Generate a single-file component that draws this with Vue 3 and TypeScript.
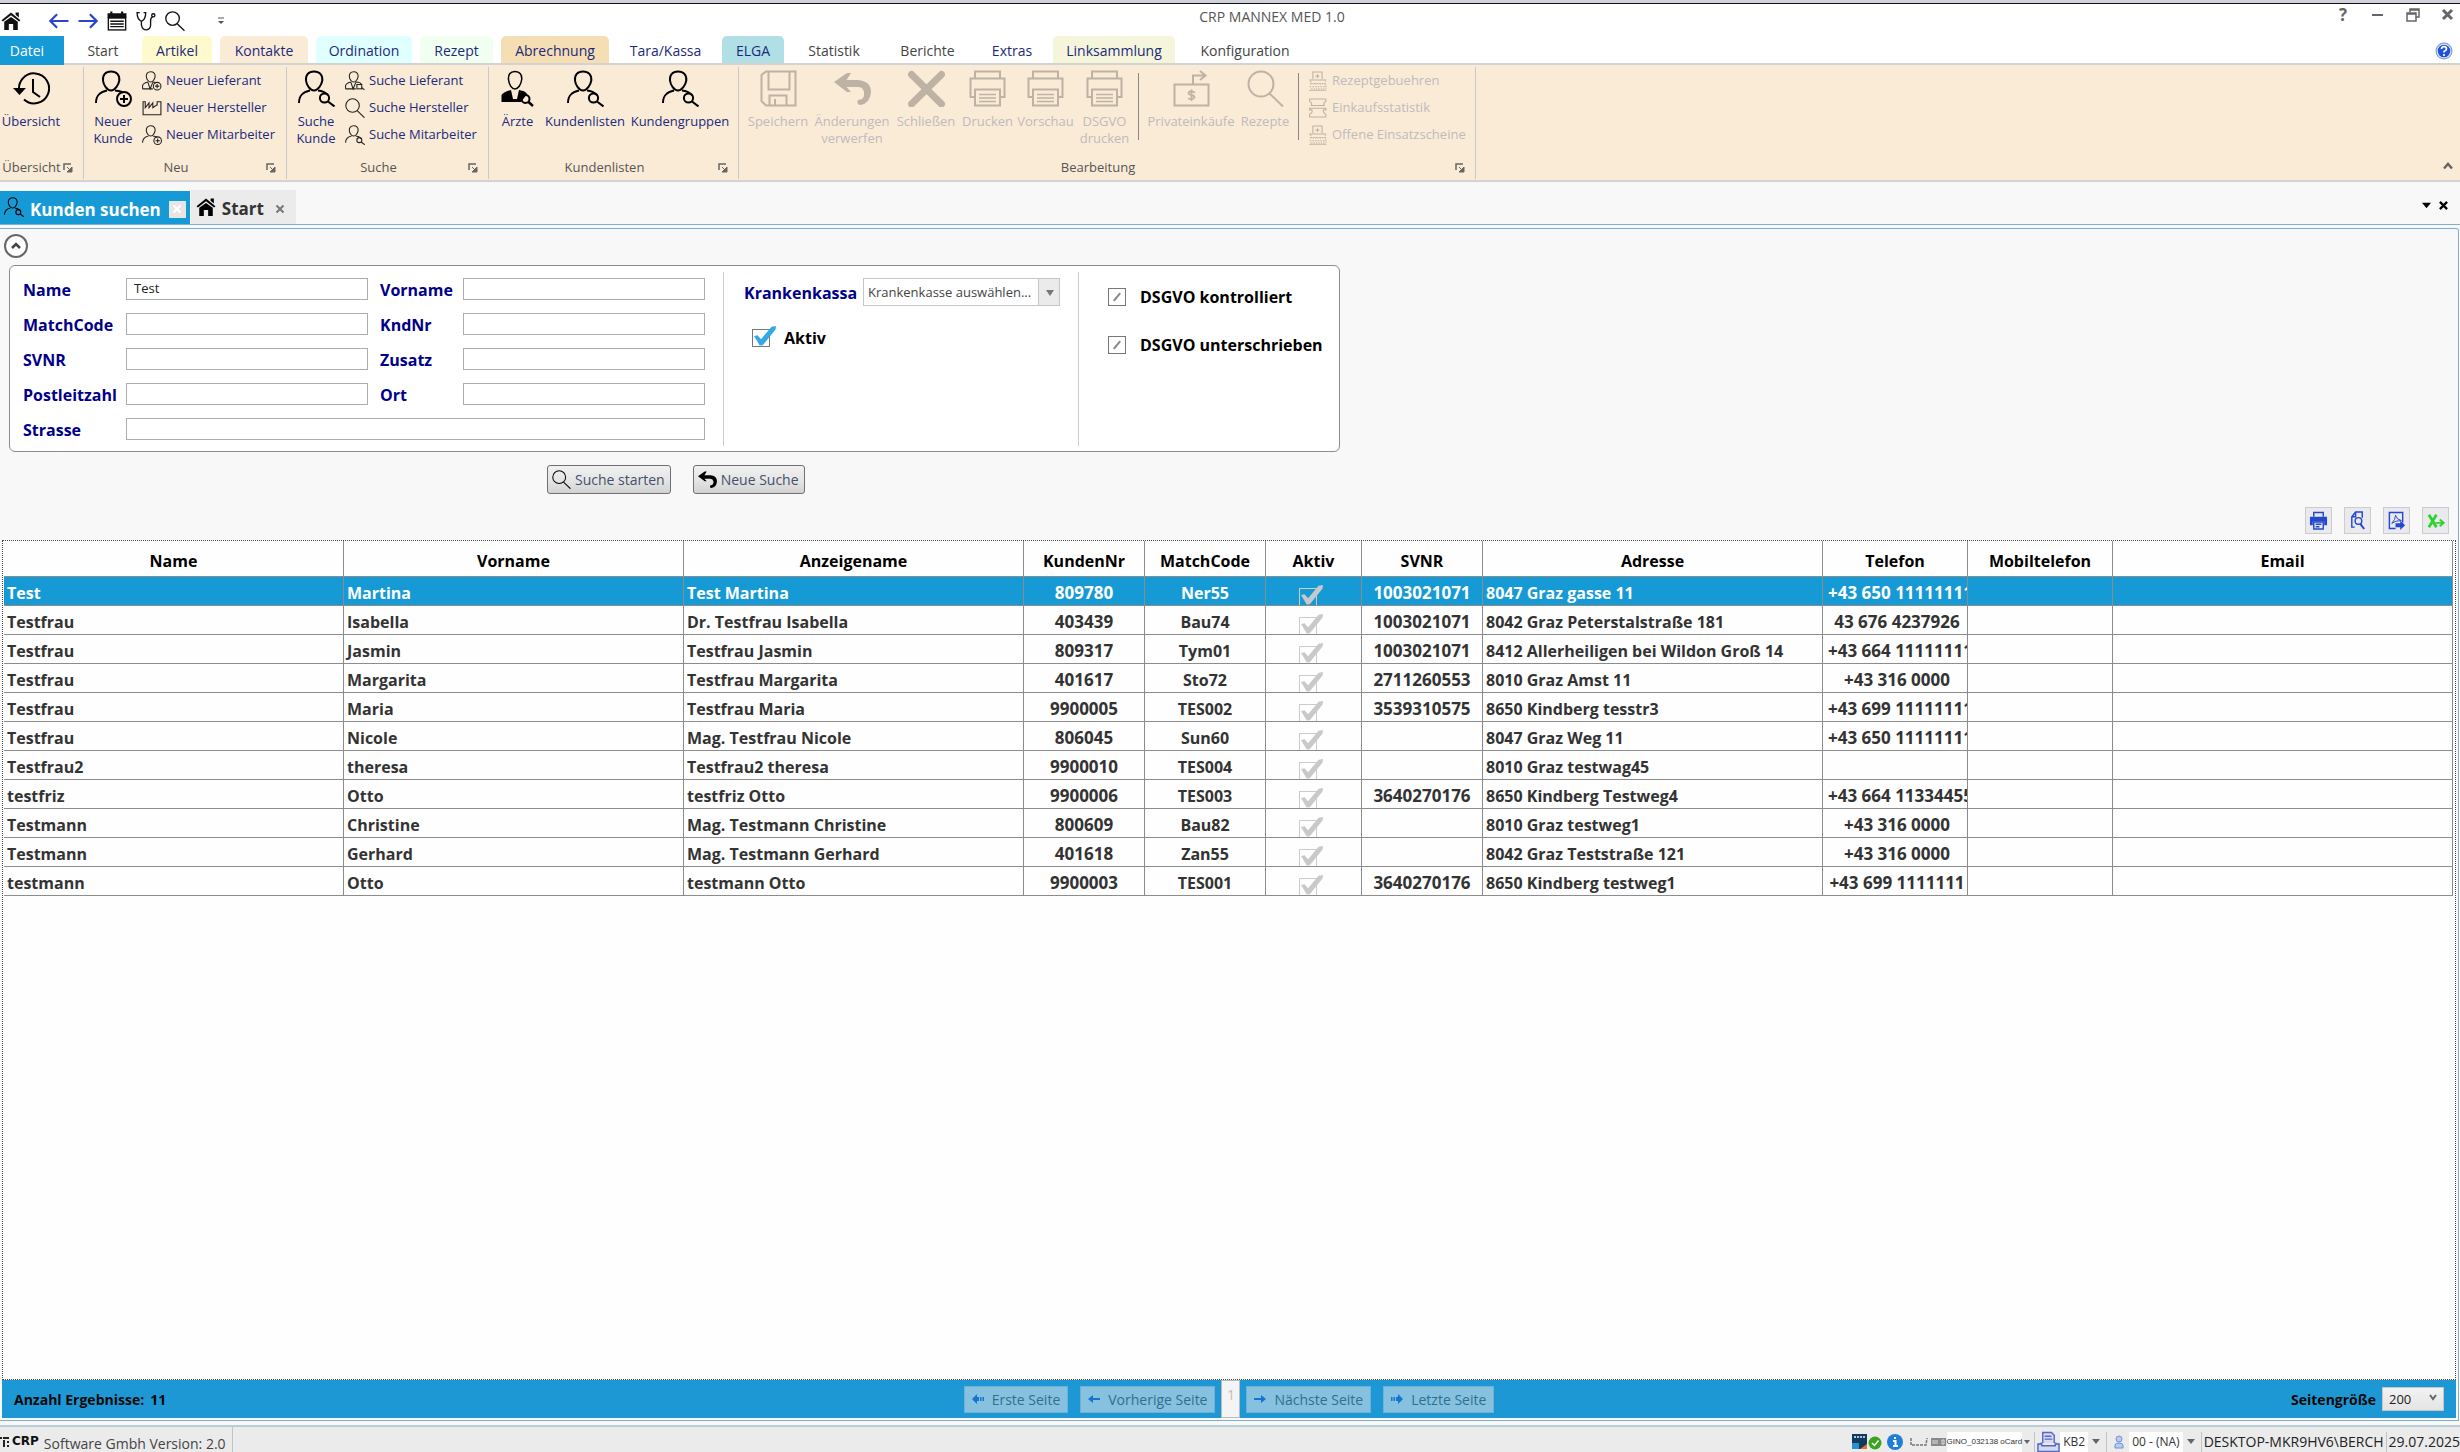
<script setup lang="ts">
import { ref } from 'vue'

interface Customer {
  name: string
  vorname: string
  anzeige: string
  nr: string
  code: string
  svnr: string
  adresse: string
  telefon: string
}

const person =
  '<path d="M16 1.500C10.500 1.500 7.500 5 8 10.500C8.500 15 12 20.500 16 20.500S23.500 15 24.300 10.500C24.800 5 21.500 1.500 16 1.500Z"/>'
const lensSmall = '<circle cx="26.500" cy="28" r="4.600"/><path d="M30 31.500L36.500 36.500"/>'

const icons: Record<string, string> = {
  history:
    '<path d="M6.500 20A15 15 0 1 1 11 27.500" transform="translate(0 2)"/><path d="M20 9v13l7 5"/><path d="M0 18h13l-6.500 7z" fill="currentColor" stroke="none"/>',
  personAdd: `${person}<path d="M1 33C1 25 5 22 12 20.500M20 20.500C24 21 26 21.500 28 22.500"/><circle cx="29" cy="29" r="7"/><path d="M29 25v8M25 29h8"/>`,
  personSearch: `${person}<path d="M1 33C1 25 5 22 12 20.500M20 20.500C25 21 28 23 30 25"/>${lensSmall}`,
  supplierAdd: `${person}<path d="M1 33V27Q3 22 11 20.500M1 33H20M11 21l4 12 5-12M20 20.500Q24 21 26 22"/><circle cx="28" cy="28" r="7"/><path d="M28 24v8M24 28h8"/>`,
  supplierSearch: `${person}<path d="M1 33V27Q3 22 11 20.500M1 33H20M11 21l4 12 5-12M20 20.500Q30 21 30 25"/><rect x="22" y="25" width="9" height="8"/><path d="M31 31l5 4"/>`,
  factory: '<path d="M2 31V7h4v11l7-9v9l7-9v9l7-5h1V7h7v24z"/>',
  lens: '<circle cx="14" cy="14" r="12.500"/><path d="M22.500 23.500L36 36.500"/>',
  doctor:
    '<path d="M16 1.500C11 1.500 9 5 9.500 9.500C10 15 13 19 16 19S22 15 22.700 9.500C23 5 21 1.500 16 1.500Z" stroke-width="1.500"/><path d="M2.500 32V25Q4 22 12 20l2 9h4l2-9Q27 21 28 24L22 32z" fill="currentColor" stroke="none"/><circle cx="26.500" cy="29" r="4" stroke-width="2"/><path d="M29.500 32L34 36" stroke-width="2.500"/>',
  save: '<path d="M6 1.500H35.500V35.500H6L1.500 31V5Z"/><path d="M8.500 2V19.500H29.500V2M9.500 35V25.500H26.500V35M15 29v6"/>',
  undo: '<path d="M0 12L13 3H17L12.500 10H24Q37 11 37 22Q36 34 26 35Q22 34 24 30Q31 30 30 22Q29 17 24 17H12.500L17 22H13Z" fill="currentColor" stroke="none"/>',
  cross: '<path d="M3.500 4.500L33.500 34M33.500 4.500L3.500 34" stroke-width="7" stroke-linecap="round"/>',
  printer:
    '<path d="M6 8.500V1.500H31V8.500M6 27H1.500V8.500H35.500V27H31"/><rect x="6" y="19.500" width="25" height="16"/><path d="M10 24.500h17M10 28h17M10 31.500h17" stroke-width="1.300"/>',
  money:
    '<rect x="1.500" y="14.500" width="34" height="21"/><path d="M20 14V5.500H32M27 1l5.500 4.500L27 10"/><path d="M22 22.500Q15.500 20 15.500 23.500Q16 25 18.500 25.200Q21.500 25.500 21.500 27.500Q20.500 30 15 28.500M18.500 19.500V31" stroke-width="1.800"/>',
  register:
    '<path d="M9 15V2h17v13M2 16.500h32M2 35.500h32M17.500 6v7M14 9.500h7"/><path d="M5 18v5h27v-5M3 29h31" stroke-dasharray="3 2"/><path d="M4 24h29v9H4" stroke-dasharray="2 2.500"/>',
  stack:
    '<path d="M3 2h30v4q-6 4-3 8H6q3-4-3-8zM3 19h30v3h-4q-3 4 4 8v5H3v-5q7-4 4-8H3z"/>',
  home: '<path d="M1 17L18.500 3L36 17L33.500 19.500L18.500 8L3.500 19.500ZM27 3h6v9l-6-5zM6 20L18.500 11L31 20V35H22.500V24h-8V35H6Z" fill="currentColor" stroke="none"/>',
  arrowLeft: '<path d="M36 18.500H3M15 6L2.500 18.500L15 31"/>',
  arrowRight: '<path d="M1 18.500H34M22 6L34.500 18.500L22 31"/>',
  calendar:
    '<path d="M1 4h5v-3h4v3h16v-3h4v3h6v9H1z" fill="currentColor" stroke="none"/><rect x="2.500" y="13" width="32" height="22"/><path d="M6 19h25M6 24h25M6 29h25" stroke-width="2.500"/>',
  stetho:
    '<path d="M7 3H2Q2 16 10 19Q18 16 18 3H14M10 19V26Q12 35 19 35Q27 34 27 26V18Q27 12 31 11"/><circle cx="32" cy="8" r="3"/>',
  launcher: '<path d="M1 7V1H8" stroke-width="1.500"/><path d="M4 4l3 3M9 4v5H4z" fill="currentColor" stroke-width="1"/>',
}

const tabs = [
  { label: 'Datei', cls: 'file' },
  { label: 'Start', cls: 'plain' },
  { label: 'Artikel', cls: 'yellow' },
  { label: 'Kontakte', cls: 'peach' },
  { label: 'Ordination', cls: 'cyan' },
  { label: 'Rezept', cls: 'mint' },
  { label: 'Abrechnung', cls: 'wheat' },
  { label: 'Tara/Kassa', cls: '' },
  { label: 'ELGA', cls: 'teal' },
  { label: 'Statistik', cls: 'plain' },
  { label: 'Berichte', cls: 'plain' },
  { label: 'Extras', cls: '' },
  { label: 'Linksammlung', cls: 'beige' },
  { label: 'Konfiguration', cls: 'plain' },
]

const groups = [
  { id: 'overview', title: 'Übersicht', big: [{ icon: 'history', label: ['Übersicht'] }], small: [] },
  {
    id: 'new',
    title: 'Neu',
    big: [{ icon: 'personAdd', label: ['Neuer', 'Kunde'] }],
    small: [
      { icon: 'supplierAdd', label: 'Neuer Lieferant' },
      { icon: 'factory', label: 'Neuer Hersteller' },
      { icon: 'personAdd', label: 'Neuer Mitarbeiter' },
    ],
  },
  {
    id: 'search',
    title: 'Suche',
    big: [{ icon: 'personSearch', label: ['Suche', 'Kunde'] }],
    small: [
      { icon: 'supplierSearch', label: 'Suche Lieferant' },
      { icon: 'lens', label: 'Suche Hersteller' },
      { icon: 'personSearch', label: 'Suche Mitarbeiter' },
    ],
  },
  {
    id: 'lists',
    title: 'Kundenlisten',
    big: [
      { icon: 'doctor', label: ['Ärzte'] },
      { icon: 'personSearch', label: ['Kundenlisten'] },
      { icon: 'personSearch', label: ['Kundengruppen'] },
    ],
    small: [],
  },
  {
    id: 'edit',
    title: 'Bearbeitung',
    disabled: true,
    big: [
      { icon: 'save', label: ['Speichern'] },
      { icon: 'undo', label: ['Änderungen', 'verwerfen'] },
      { icon: 'cross', label: ['Schließen'] },
      { icon: 'printer', label: ['Drucken'] },
      { icon: 'printer', label: ['Vorschau'] },
      { icon: 'printer', label: ['DSGVO', 'drucken'] },
      { icon: '', label: [] },
      { icon: 'money', label: ['Privateinkäufe'] },
      { icon: 'lens', label: ['Rezepte'] },
      { icon: '', label: [] },
    ],
    small: [
      { icon: 'register', label: 'Rezeptgebuehren' },
      { icon: 'stack', label: 'Einkaufsstatistik' },
      { icon: 'register', label: 'Offene Einsatzscheine' },
    ],
  },
]

const fields = [
  { id: 'name', label: 'Name' },
  { id: 'vorname', label: 'Vorname' },
  { id: 'matchcode', label: 'MatchCode' },
  { id: 'kndnr', label: 'KndNr' },
  { id: 'svnr', label: 'SVNR' },
  { id: 'zusatz', label: 'Zusatz' },
  { id: 'plz', label: 'Postleitzahl' },
  { id: 'ort', label: 'Ort' },
  { id: 'strasse', label: 'Strasse' },
]
const query = ref<Record<string, string>>({ name: 'Test' })
const aktiv = ref(true)

const columns = ['Name', 'Vorname', 'Anzeigename', 'KundenNr', 'MatchCode', 'Aktiv', 'SVNR', 'Adresse', 'Telefon', 'Mobiltelefon', 'Email']

const rows: Customer[] = [
  { name: 'Test', vorname: 'Martina', anzeige: 'Test Martina', nr: '809780', code: 'Ner55', svnr: '1003021071', adresse: '8047 Graz gasse 11', telefon: '+43 650 11111111' },
  { name: 'Testfrau', vorname: 'Isabella', anzeige: 'Dr. Testfrau Isabella', nr: '403439', code: 'Bau74', svnr: '1003021071', adresse: '8042 Graz Peterstalstraße 181', telefon: '43 676 4237926' },
  { name: 'Testfrau', vorname: 'Jasmin', anzeige: 'Testfrau Jasmin', nr: '809317', code: 'Tym01', svnr: '1003021071', adresse: '8412 Allerheiligen bei Wildon Groß 14', telefon: '+43 664 11111111' },
  { name: 'Testfrau', vorname: 'Margarita', anzeige: 'Testfrau Margarita', nr: '401617', code: 'Sto72', svnr: '2711260553', adresse: '8010 Graz Amst 11', telefon: '+43 316 0000' },
  { name: 'Testfrau', vorname: 'Maria', anzeige: 'Testfrau Maria', nr: '9900005', code: 'TES002', svnr: '3539310575', adresse: '8650 Kindberg tesstr3', telefon: '+43 699 11111111' },
  { name: 'Testfrau', vorname: 'Nicole', anzeige: 'Mag. Testfrau Nicole', nr: '806045', code: 'Sun60', svnr: '', adresse: '8047 Graz Weg 11', telefon: '+43 650 11111111' },
  { name: 'Testfrau2', vorname: 'theresa', anzeige: 'Testfrau2 theresa', nr: '9900010', code: 'TES004', svnr: '', adresse: '8010 Graz testwag45', telefon: '' },
  { name: 'testfriz', vorname: 'Otto', anzeige: 'testfriz Otto', nr: '9900006', code: 'TES003', svnr: '3640270176', adresse: '8650 Kindberg Testweg4', telefon: '+43 664 11334455' },
  { name: 'Testmann', vorname: 'Christine', anzeige: 'Mag. Testmann Christine', nr: '800609', code: 'Bau82', svnr: '', adresse: '8010 Graz testweg1', telefon: '+43 316 0000' },
  { name: 'Testmann', vorname: 'Gerhard', anzeige: 'Mag. Testmann Gerhard', nr: '401618', code: 'Zan55', svnr: '', adresse: '8042 Graz Teststraße 121', telefon: '+43 316 0000' },
  { name: 'testmann', vorname: 'Otto', anzeige: 'testmann Otto', nr: '9900003', code: 'TES001', svnr: '3640270176', adresse: '8650 Kindberg testweg1', telefon: '+43 699 1111111' },
]
</script>

<template>
  <div class="app">
    <header class="titlebar">
      <nav class="quick" aria-label="Schnellzugriff">
        <button class="home" aria-label="Startseite"><svg viewBox="0 0 37 37" v-html="icons.home" /></button>
        <button class="nav" aria-label="Zurück"><svg viewBox="0 0 37 37" v-html="icons.arrowLeft" /></button>
        <button class="nav" aria-label="Vor"><svg viewBox="0 0 37 37" v-html="icons.arrowRight" /></button>
        <button aria-label="Kalender"><svg viewBox="0 0 37 37" v-html="icons.calendar" /></button>
        <button aria-label="Ordination"><svg viewBox="0 0 37 37" v-html="icons.stetho" /></button>
        <button aria-label="Suchen"><svg viewBox="0 0 37 37" v-html="icons.lens" /></button>
        <button class="more" aria-label="Anpassen">
          <svg viewBox="0 0 8 8"><path d="M1 1h6" stroke-width="1" /><path d="M1 4h6L4 7z" fill="currentColor" stroke="none" /></svg>
        </button>
      </nav>
      <h1>CRP MANNEX MED 1.0</h1>
      <div class="winctl">
        <button aria-label="Hilfe" class="q">?</button>
        <button aria-label="Minimieren"><svg viewBox="0 0 14 14"><path d="M1 7h11" stroke-width="2" /></svg></button>
        <button aria-label="Wiederherstellen">
          <svg viewBox="0 0 14 14"><path d="M1 5h9v8H1zM1 6h9M4 4V1h9v8h-3M4 2h9" stroke-width="1.500" /></svg>
        </button>
        <button aria-label="Schließen"><svg viewBox="0 0 14 14"><path d="M2 2l9 9M11 2l-9 9" stroke-width="3" /></svg></button>
      </div>
    </header>

    <nav class="tabs">
      <button v-for="t in tabs" :key="t.label" class="tab" :class="t.cls">{{ t.label }}</button>
      <button class="help" aria-label="Hilfe anzeigen">
        <svg viewBox="0 0 18 18"><circle cx="9" cy="9" r="8.500" fill="#7c9de0" /><circle cx="9" cy="9" r="7.300" fill="#e3ecff" /><circle cx="9" cy="9" r="6.300" fill="#1f52d6" /><path d="M6.500 7Q6.500 4.700 9 4.700T11.500 7Q11.500 8.300 9 9.500V10.500M9 12v2" fill="none" stroke="#fff" stroke-width="1.700" /></svg>
      </button>
    </nav>

    <section class="ribbon">
      <div v-for="g in groups" :key="g.id" class="group" :class="[g.id, { off: g.disabled }]">
        <div class="tools">
          <template v-for="(b, i) in g.big" :key="i">
            <button v-if="b.icon" class="big" :disabled="g.disabled">
              <svg viewBox="0 0 37 37" v-html="icons[b.icon]" />
              <span v-for="l in b.label" :key="l">{{ l }}</span>
            </button>
            <i v-else class="rule" />
          </template>
          <div v-if="g.small.length" class="smalls">
            <button v-for="s in g.small" :key="s.label" class="small" :disabled="g.disabled">
              <svg viewBox="0 0 37 37" v-html="icons[s.icon]" />{{ s.label }}
            </button>
          </div>
        </div>
        <footer>
          <span>{{ g.title }}</span>
          <button :aria-label="g.title + ' Optionen'"><svg viewBox="0 0 10 10" v-html="icons.launcher" /></button>
        </footer>
      </div>
      <button class="fold" aria-label="Menüband einklappen"><svg viewBox="0 0 10 10"><path d="M1 7.500L5 3l4 4.500" stroke-width="2.500" /></svg></button>
    </section>

    <nav class="docs">
      <div class="doc active">
        <svg viewBox="0 0 37 37" v-html="icons.personSearch" />
        <span>Kunden suchen</span>
        <button aria-label="Kunden suchen schließen"><svg viewBox="0 0 10 10"><path d="M1.500 1.500l7 7M8.500 1.500l-7 7" /></svg></button>
      </div>
      <div class="doc">
        <svg viewBox="0 0 37 37" v-html="icons.home" />
        <span>Start</span>
        <button aria-label="Start schließen"><svg viewBox="0 0 10 10"><path d="M1.500 1.500l7 7M8.500 1.500l-7 7" /></svg></button>
      </div>
      <div class="docctl">
        <button aria-label="Fensterliste"><svg viewBox="0 0 10 10"><path d="M0 2h10L5 8z" fill="currentColor" stroke="none" /></svg></button>
        <button aria-label="Fenster schließen"><svg viewBox="0 0 10 10"><path d="M1 1l8 8M9 1l-8 8" stroke-width="2.500" /></svg></button>
      </div>
    </nav>

    <main class="work">
      <button class="expander" aria-label="Suchbereich einklappen"><svg viewBox="0 0 10 10"><path d="M1 7l4-4 4 4" stroke-width="2.500" /></svg></button>

      <form class="panel" @submit.prevent>
        <div class="fields">
          <template v-for="f in fields" :key="f.id">
            <label :for="f.id">{{ f.label }}</label>
            <input :id="f.id" v-model="query[f.id]" type="text" :class="{ wide: f.id === 'strasse' }" />
          </template>
        </div>
        <div class="insurance">
          <div class="line">
            <label for="kasse">Krankenkassa</label>
            <span class="pick"><select id="kasse"><option>Krankenkasse auswählen...</option></select></span>
          </div>
          <label class="check"><input v-model="aktiv" type="checkbox" class="tick blue" />Aktiv</label>
        </div>
        <div class="privacy">
          <label class="check"><input type="checkbox" class="partial" />DSGVO kontrolliert</label>
          <label class="check"><input type="checkbox" class="partial" />DSGVO unterschrieben</label>
        </div>
      </form>

      <div class="actions">
        <button><svg viewBox="0 0 37 37" v-html="icons.lens" />Suche starten</button>
        <button><svg viewBox="0 0 37 37" v-html="icons.undo" />Neue Suche</button>
      </div>

      <div class="export">
        <button aria-label="Drucken"><svg viewBox="0 0 20 20"><path d="M5 6V1.500h10V6" /><path d="M1 6h18v9h-3v-4H4v4H1z" fill="currentColor" stroke="none" /><path d="M5 11.500h10V19H5zM7 14h6M7 16.500h4" /></svg></button>
        <button aria-label="Vorschau"><svg viewBox="0 0 20 20"><path d="M7 17H4V6l4-5h7v6M4 6h4V1" /><circle cx="11" cy="10.500" r="3.500" /><path d="M13 13.500l4 5.500" stroke-width="2" /></svg></button>
        <button aria-label="PDF"><svg viewBox="0 0 20 20"><path d="M9 18.500H2.500V1.500h14V12" /><path d="M5 13Q9 9 9 4.500Q10 9 15 10Q9 10 5 13" stroke-width="1" /><path d="M9 13h5v-3l5 5-5 5v-3H9z" fill="currentColor" stroke="none" /></svg></button>
        <button class="excel" aria-label="Excel"><svg viewBox="0 0 20 20"><path d="M3 4l8 13M11 4L3 17" stroke-width="3" /><path d="M10 12.500h8M14.500 9l4 3.500-4 3.500" stroke-width="2" /></svg></button>
      </div>

      <section class="grid">
        <table>
          <colgroup><col class="w-name" /><col class="w-name" /><col class="w-name" /><col class="w-nr" /><col class="w-nr" /><col class="w-aktiv" /><col class="w-nr" /><col class="w-name" /><col class="w-tel" /><col class="w-tel" /><col /></colgroup>
          <thead>
            <tr><th v-for="c in columns" :key="c">{{ c }}</th></tr>
          </thead>
          <tbody>
            <tr v-for="(r, i) in rows" :key="r.nr" :class="{ sel: i === 0 }">
              <td>{{ r.name }}</td>
              <td>{{ r.vorname }}</td>
              <td>{{ r.anzeige }}</td>
              <td class="c num">{{ r.nr }}</td>
              <td class="c">{{ r.code }}</td>
              <td class="box"><div class="cell"><input type="checkbox" class="tick" checked disabled :aria-label="r.anzeige + ' aktiv'" /></div></td>
              <td class="c num">{{ r.svnr }}</td>
              <td>{{ r.adresse }}</td>
              <td class="c num tel">{{ r.telefon }}</td>
              <td></td>
              <td></td>
            </tr>
          </tbody>
        </table>
      </section>

      <div class="pager">
        <div class="count">Anzahl Ergebnisse:<span>11</span></div>
        <div class="pages">
          <button disabled><svg viewBox="0 0 12 12"><path d="M0 6l5-5v3h2v4H5v3zM8 4h1.500v4H8zM10.500 4H12v4h-1.500z" /></svg>Erste Seite</button>
          <button disabled><svg viewBox="0 0 12 12"><path d="M0 6l5-4v3h7v2H5v3z" /></svg>Vorherige Seite</button>
          <span class="page">1</span>
          <button disabled><svg viewBox="0 0 12 12"><path d="M12 6L7 2v3H0v2h7v3z" /></svg>Nächste Seite</button>
          <button disabled><svg viewBox="0 0 12 12"><path d="M12 6L7 1v3H5v4h2v3zM4 4H2.500v4H4zM1.500 4H0v4h1.500z" /></svg>Letzte Seite</button>
        </div>
        <div class="size">
          <label for="size">Seitengröße</label>
          <span class="pick"><select id="size"><option>200</option></select><svg viewBox="0 0 10 10"><path d="M2 2l3 4 3-4" /></svg></span>
        </div>
      </div>
    </main>

    <footer class="status">
      <div class="brand">
        <svg viewBox="0 0 9 11"><path d="M0 1h2v2H0zM3 1h6v2H3zM3 4h2v7H3zM7 5h2v2H7zM7 9h2v2H7z" /></svg>
        <b>CRP</b><span>Software Gmbh Version: 2.0</span>
      </div>
      <div class="tray">
        <svg class="monitor" viewBox="0 0 30 16"><path d="M0 0h15v11L9 15H0z" fill="#123a5c" /><path d="M2 3h11" stroke="#a8c8dc" stroke-width="2" stroke-dasharray="2 1" /><path d="M0 9h7v6H0z" fill="#2a8fd0" /><path d="M15 10v5H8z" fill="#e07a28" /><circle cx="23" cy="9" r="6.500" fill="#3aa51d" /><path d="M20 9l2.500 2.500L26.500 6.500" fill="none" stroke="#fff" stroke-width="1.500" /></svg>
        <button class="info" aria-label="Info"><svg viewBox="0 0 16 16"><circle cx="8" cy="8" r="8" fill="#1f7fd6" /><path d="M8 3v2M6 7h2.500v5M6 12h5" fill="none" stroke="#fff" stroke-width="2" /></svg></button>
        <svg class="reader" viewBox="0 0 18 10"><path d="M1 1v7h15l1-7" fill="none" stroke="#777" stroke-width="1.500" stroke-dasharray="3 1" /></svg>
        <svg class="keys" viewBox="0 0 15 10"><path d="M0 1h15v8H0z" fill="#8a8a8a" /><path d="M2 3v4M4 3v4M6 3v4M11 3h2v4h-2z" fill="none" stroke="#ddd" /></svg>
        <span class="field card">GINO_032138 oCard</span><i class="caret tiny" />
        <hr />
        <svg class="print" viewBox="0 0 24 22"><path d="M6 12V1h9l3 3v8M8 5h7M8 8h8M1 13h4v2h14v-2h4v8H1zM5 12L1 14M19 12l4 2" fill="#d5daf2" stroke="#5468c4" stroke-width="1.500" /></svg>
        <span class="field">KB2</span><i class="caret" />
        <hr />
        <svg class="user" viewBox="0 0 10 14"><circle cx="5" cy="4" r="3" /><path d="M1 13V10Q1 8 5 8t4 2v3z" /></svg>
        <span class="field">00 - (NA)</span><i class="caret" />
        <hr />
        <span class="host">DESKTOP-MKR9HV6\BERCH</span>
        <hr />
        <span class="host">29.07.2025</span>
      </div>
    </footer>
  </div>
</template>

<style>
body {
  margin: 0;
  background: #f8f8f8;
}
</style>

<style scoped>
.app {
  display: flex;
  flex-direction: column;
  min-height: 100vh;
  overflow: hidden;
  font: 14px/17px 'Open Sans', 'Noto Sans', sans-serif;
  color: #444;
}
.app *,
.app *::before,
.app *::after {
  box-sizing: border-box;
}
button {
  font: inherit;
  color: inherit;
  background: none;
  border: 0;
  padding: 0;
  margin: 0;
  white-space: nowrap;
}
svg {
  display: block;
  flex: none;
  fill: none;
  stroke: currentColor;
}

/* title bar */
.titlebar {
  display: grid;
  grid-template-columns: 1fr auto 1fr;
  height: 36px;
  background: #fff;
  border-top: 3px solid #d2d2da;
  box-shadow: inset 0 1px #111;
}
.titlebar h1 {
  margin: 5px 0 0 84px;
  font-size: 14px;
  line-height: 17px;
  font-weight: 400;
  color: #555;
}
.quick {
  display: flex;
  align-items: center;
  gap: 9px;
  padding: 3px 0 0 1px;
  color: #111;
}
.quick svg {
  width: 20px;
  height: 20px;
  stroke-width: 2.5;
}
.quick .home {
  margin-right: 19px;
}
.quick .nav {
  color: #2a45cc;
}
.quick .nav svg {
  stroke-width: 4;
}
.quick .more {
  margin-left: 23px;
  color: #555;
}
.quick .more svg {
  width: 8px;
  height: 8px;
}
.winctl {
  display: flex;
  justify-content: flex-end;
  align-items: flex-start;
  gap: 21px;
  padding: 5px 5px 0 0;
  color: #666;
}
.winctl svg {
  width: 14px;
  height: 14px;
}
.winctl button {
  height: 14px;
}
.winctl .q {
  width: 14px;
  font: 700 17px/14px 'Open Sans', sans-serif;
}

/* ribbon tabs */
.tabs {
  display: grid;
  grid-template-columns: 64px 62px 70px 88px 96px 73px 108px 97px 62px 84px 87px 66px 122px 124px 1fr;
  column-gap: 8px;
  height: 27px;
  background: #fff;
}
.tab {
  border-radius: 5px 5px 0 0;
  color: #1b2a7a;
}
.tab.plain {
  color: #444;
}
.tab.file {
  height: 29px;
  position: relative;
  padding-right: 10px;
  border-radius: 0;
  background: #169ad6;
  color: #fff;
}
.tab.yellow {
  background: #fffacd;
}
.tab.peach {
  background: #faebd7;
}
.tab.cyan {
  background: #e0ffff;
}
.tab.mint {
  background: #f0fff0;
}
.tab.wheat {
  background: #f5deb3;
}
.tab.teal {
  background: #b0e0e6;
}
.tab.beige {
  background: #f5f5dc;
}
.help {
  justify-self: end;
  margin-right: 7px;
}
.help svg {
  width: 18px;
  height: 18px;
  stroke: none;
}

/* ribbon */
.ribbon {
  display: flex;
  height: 119px;
  padding: 2px 0 1px;
  background: #faebd7;
  border-top: 2px solid #d3d3d3;
  border-bottom: 2px solid #d3d3d3;
  font-size: 13px;
}
.group {
  display: flex;
  flex-direction: column;
  flex: none;
  border-right: 1px solid #c8c8c8;
  color: #1b2a7a;
}
.group.overview {
  width: 84px;
}
.group.new {
  width: 203px;
}
.group.search {
  width: 202px;
}
.group.lists {
  width: 250px;
}
.group.edit {
  width: 737px;
}
.tools {
  display: grid;
  flex: 1;
  align-items: start;
}
.overview .tools {
  grid-template-columns: 62px;
}
.new .tools,
.search .tools {
  grid-template-columns: 58px auto;
}
.lists .tools {
  grid-template-columns: 57px 78px 112px;
}
.edit .tools {
  grid-template-columns: 70px 78px 70px 53px 63px 55px 12px 94px 54px 12px auto;
  padding-left: 4px;
}
.big {
  display: flex;
  flex-direction: column;
  align-items: center;
  padding-top: 3px;
}
.big svg {
  width: 37px;
  height: 37px;
  margin-bottom: 6px;
  color: #000;
  stroke-width: 2;
}
.smalls {
  display: flex;
  flex-direction: column;
}
.small {
  display: flex;
  align-items: center;
  gap: 4px;
  height: 27px;
}
.small svg {
  width: 20px;
  height: 20px;
  color: #222;
  stroke-width: 2;
}
.off .big,
.off .small {
  color: #c0babd;
}
.off svg {
  color: #bdb2a3;
}
.edit .smalls {
  padding-left: 4px;
}
.rule {
  width: 1px;
  height: 67px;
  margin: 6px 6px 0;
  background: #888;
}
.group footer {
  display: flex;
  align-items: center;
  height: 23px;
  padding: 0 10px 0 2px;
  color: #555;
}
.group.overview footer {
  padding-left: 0;
}
.group footer span {
  flex: 1;
  text-align: center;
  white-space: nowrap;
}
.group footer svg {
  width: 10px;
  height: 10px;
  color: #666;
}
.fold {
  margin: auto 7px 8px auto;
  color: #666;
}
.fold svg {
  width: 10px;
  height: 10px;
}

/* document tabs */
.docs {
  display: flex;
  align-items: flex-end;
  height: 43px;
  border-bottom: 1px solid #7fb0d2;
}
.doc {
  display: flex;
  align-items: center;
  gap: 6px;
  height: 34px;
  padding: 3px 7px 0 5px;
  background: #ebebeb;
  color: #333;
  font-size: 17px;
  font-weight: 700;
}
.doc > svg {
  width: 20px;
  height: 20px;
  margin-top: -4px;
  color: #000;
  stroke-width: 2;
}
.doc button {
  display: grid;
  place-items: center;
  width: 17px;
  height: 17px;
  margin-left: 2px;
  color: #777;
}
.doc button svg {
  width: 10px;
  height: 10px;
  stroke-width: 2;
}
.doc.active {
  height: 33px;
  padding: 3px 4px 0;
  margin-right: 1px;
  background: #169ad6;
  color: #fff;
}
.doc.active button {
  background: #e6e6e6;
  color: #fff;
}
.docctl {
  display: flex;
  gap: 8px;
  margin: 0 12px 14px auto;
  color: #000;
}
.docctl svg {
  width: 9px;
  height: 9px;
}

/* work area */
.work {
  display: flex;
  flex-direction: column;
  flex: 1;
  margin: 3px 1px 4px 0;
  padding: 0 2px 2px;
  border: 1px solid #7fb0d2;
  border-left: 0;
  border-radius: 0 3px 0 0;
}
.expander {
  display: grid;
  place-items: center;
  align-self: flex-start;
  width: 24px;
  height: 24px;
  margin: 5px 0 0 2px;
  border: 2px solid #666;
  border-radius: 50%;
  background: #fff;
}
.expander svg {
  width: 10px;
  height: 10px;
}
.panel {
  display: flex;
  align-self: flex-start;
  margin: 7px 0 0 7px;
  padding: 6px 16px 5px 13px;
  border: 1px solid #8c8c8c;
  border-radius: 6px;
  background: #fff;
  font-size: 16px;
  font-weight: 700;
}
.fields {
  display: grid;
  grid-template-columns: 103px 242px 95px 242px;
  grid-auto-rows: 22px;
  row-gap: 13px;
  align-items: center;
  padding: 6px 18px 6px 0;
  color: #00008b;
}
.fields label,
.line label {
  padding-top: 2px;
}
.fields label:nth-of-type(even) {
  padding-left: 12px;
}
.fields input {
  height: 22px;
  width: 100%;
  padding: 0 7px 2px;
  border: 1px solid #abadb3;
  background: #fff;
  font: 13px/17px 'Open Sans', 'Noto Sans', sans-serif;
  color: #222;
}
.fields .wide {
  grid-column: 2 / 5;
}
.insurance {
  width: 356px;
  padding: 6px 18px 0 20px;
  border-left: 1px solid #ccc;
  border-right: 1px solid #ccc;
}
.line {
  display: flex;
  justify-content: space-between;
  align-items: center;
  color: #00008b;
}
.pick {
  position: relative;
  display: block;
}
.pick select {
  display: block;
  appearance: none;
  font: 13px/17px 'Open Sans', 'Noto Sans', sans-serif;
  color: #444;
  border: 1px solid #c6c6c6;
  border-radius: 0;
}
.line select {
  width: 197px;
  height: 28px;
  padding: 0 21px 0 4px;
  background: linear-gradient(to left, #ebebeb 20px, #c6c6c6 20px 21px, #fff 21px);
}
.line .pick::after {
  content: '';
  position: absolute;
  right: 6px;
  top: 12px;
  border: 4px solid transparent;
  border-top: 6px solid #777;
  border-bottom: 0;
}
.check {
  display: flex;
  align-items: center;
  gap: 14px;
  color: #000;
}
.insurance .check {
  margin: 23px 0 0 8px;
}
.privacy {
  display: flex;
  flex-direction: column;
  gap: 30px;
  padding: 16px 0 0 29px;
}
.check input,
.cell input {
  position: relative;
  appearance: none;
  flex: none;
  width: 18px;
  height: 18px;
  margin: 0;
  border: 1px solid #777;
  background: #fff;
}
.tick::after {
  content: '';
  position: absolute;
  left: 1px;
  top: -4px;
  width: 22px;
  height: 20px;
  background: #c9c9c9;
  clip-path: polygon(0 50%, 16% 46%, 32% 66%, 80% 4%, 100% 0, 98% 18%, 40% 96%, 26% 98%);
}
.tick.blue::after {
  background: #33a9e6;
}
.partial::after {
  content: '';
  position: absolute;
  left: 7px;
  top: 3px;
  width: 2px;
  height: 10px;
  background: #888;
  transform: rotate(40deg);
}
.actions {
  display: flex;
  gap: 22px;
  margin: 13px 0 0 545px;
}
.actions button {
  display: flex;
  align-items: center;
  gap: 4px;
  height: 29px;
  padding: 0 5px 0 4px;
  border: 1px solid #707070;
  border-radius: 3px;
  background: linear-gradient(#f0f0f0, #e6e6e6 50%, #d2d2d2);
  color: #44506a;
}
.actions svg {
  width: 19px;
  height: 19px;
  color: #000;
  stroke-width: 2;
}
.export {
  display: flex;
  justify-content: flex-end;
  gap: 12px;
  margin: 13px 7px 6px;
  color: #2347cf;
}
.export button {
  display: grid;
  place-items: center;
  width: 27px;
  height: 27px;
  border: 1px solid #ccc;
  background: #e9e9ee;
}
.export .excel {
  color: #2fd32f;
}
.export svg {
  width: 19px;
  height: 19px;
  stroke-width: 1.5;
}

/* result grid */
.grid {
  flex: 1;
  padding: 0 2px 0 1px;
  border: 1px dotted #444;
  background: #fefefe;
}
table {
  width: 100%;
  table-layout: fixed;
  border-spacing: 0;
  font-size: 16px;
  line-height: 20px;
  font-weight: 700;
}
.w-name {
  width: 340px;
}
.w-nr {
  width: 121px;
}
.w-aktiv {
  width: 96px;
}
.w-tel {
  width: 145px;
}
th,
td {
  height: 29px;
  padding: 4px 3px 0;
  overflow: hidden;
  white-space: nowrap;
  text-align: left;
  border-right: 1px solid #8c8c8c;
  border-bottom: 1px solid #8c8c8c;
  color: #333;
}
th {
  height: 36px;
  text-align: center;
  color: #000;
}
.c {
  text-align: center;
}
.num {
  font-size: 17px;
}
.tel {
  padding: 4px 1px 0 5px;
}
.box {
  padding: 0;
}
.sel td {
  background: #169ad6;
  color: #fff;
}
.cell {
  height: 28px;
  padding: 11px 0 0 33px;
  overflow: hidden;
}
.cell input {
  display: block;
  height: 20px;
  border-color: #ccc;
  background: none;
}

/* pager */
.pager {
  display: grid;
  grid-template-columns: 1fr auto 1fr;
  align-items: center;
  height: 38px;
  background: #1e98d4;
  color: #0a0a0a;
  font-size: 14px;
  font-weight: 700;
}
.count {
  padding-left: 12px;
}
.count span {
  margin-left: 6px;
}
.pages {
  display: flex;
  align-items: center;
  gap: 12px;
  font-weight: 400;
}
.pages button {
  display: flex;
  align-items: center;
  gap: 8px;
  height: 27px;
  padding: 0 7px;
  border: 1px solid #6bb2d6;
  background: #86c1df;
  color: #2f708f;
}
.pages svg {
  width: 12px;
  height: 12px;
  fill: #1673d2;
  stroke: none;
}
.page {
  width: 19px;
  height: 38px;
  margin: 0 -6px;
  padding-top: 5px;
  border: 1px solid #bbb;
  background: #f4f4f4;
  color: #c4bcbc;
  text-align: center;
}
.size {
  display: flex;
  justify-content: flex-end;
  align-items: center;
  gap: 6px;
  padding-right: 12px;
}
.size select {
  width: 62px;
  height: 24px;
  padding: 0 6px;
  background: linear-gradient(#f2f2f2, #e4e4e4);
  color: #222;
}
.size svg {
  position: absolute;
  right: 6px;
  top: 6px;
  width: 10px;
  height: 10px;
  stroke-width: 2;
  color: #666;
}

/* status bar */
.status {
  display: flex;
  justify-content: space-between;
  align-items: center;
  height: 27px;
  border-top: 2px solid #b9cdd6;
  background: #ebebeb;
  font-size: 14px;
  line-height: 16px;
  white-space: nowrap;
}
.brand {
  display: flex;
  align-items: flex-start;
  height: 25px;
  border-right: 1px solid #bcc4cc;
  padding-right: 6px;
}
.brand svg {
  width: 9px;
  height: 11px;
  margin: 9px 3px 0 0;
  fill: #222;
  stroke: none;
}
.brand b {
  font: 700 12px/14px 'DejaVu Sans', sans-serif;
  color: #111;
  margin: 7px 5px 0 0;
}
.brand span {
  margin-top: 9px;
}
.tray {
  display: flex;
  align-items: center;
  height: 25px;
  padding-top: 4px;
}
.tray svg {
  stroke: none;
}
.monitor {
  width: 30px;
  height: 16px;
}
.info {
  margin: 0 7px 0 5px;
}
.info svg {
  width: 16px;
  height: 16px;
}
.reader {
  width: 18px;
  height: 10px;
}
.keys {
  width: 15px;
  height: 10px;
  margin: 0 1px 0 3px;
}
.field {
  padding: 0 3px;
  line-height: 20px;
  background: #fff;
  color: #333;
  font-size: 12px;
}
.card {
  font-family: 'Liberation Sans Narrow', 'Liberation Sans', sans-serif;
  font-size: 8px;
  padding: 0;
}
.caret {
  margin: 0 4px;
  border: 4px solid transparent;
  border-top: 5px solid #666;
  border-bottom: 0;
}
.tiny {
  margin: 0 2px;
  border-width: 3px;
  border-top-width: 4px;
}
.tray hr {
  width: 1px;
  height: 20px;
  margin: 0 2px;
  border: 0;
  background: #bcc4cc;
}
.print {
  width: 23px;
  height: 22px;
}
.user {
  width: 10px;
  height: 14px;
  margin: 0 5px;
  fill: #b7cbee;
  color: #6f92d4;
}
.tray .user {
  stroke: currentColor;
}
.host {
  color: #222;
}
</style>
